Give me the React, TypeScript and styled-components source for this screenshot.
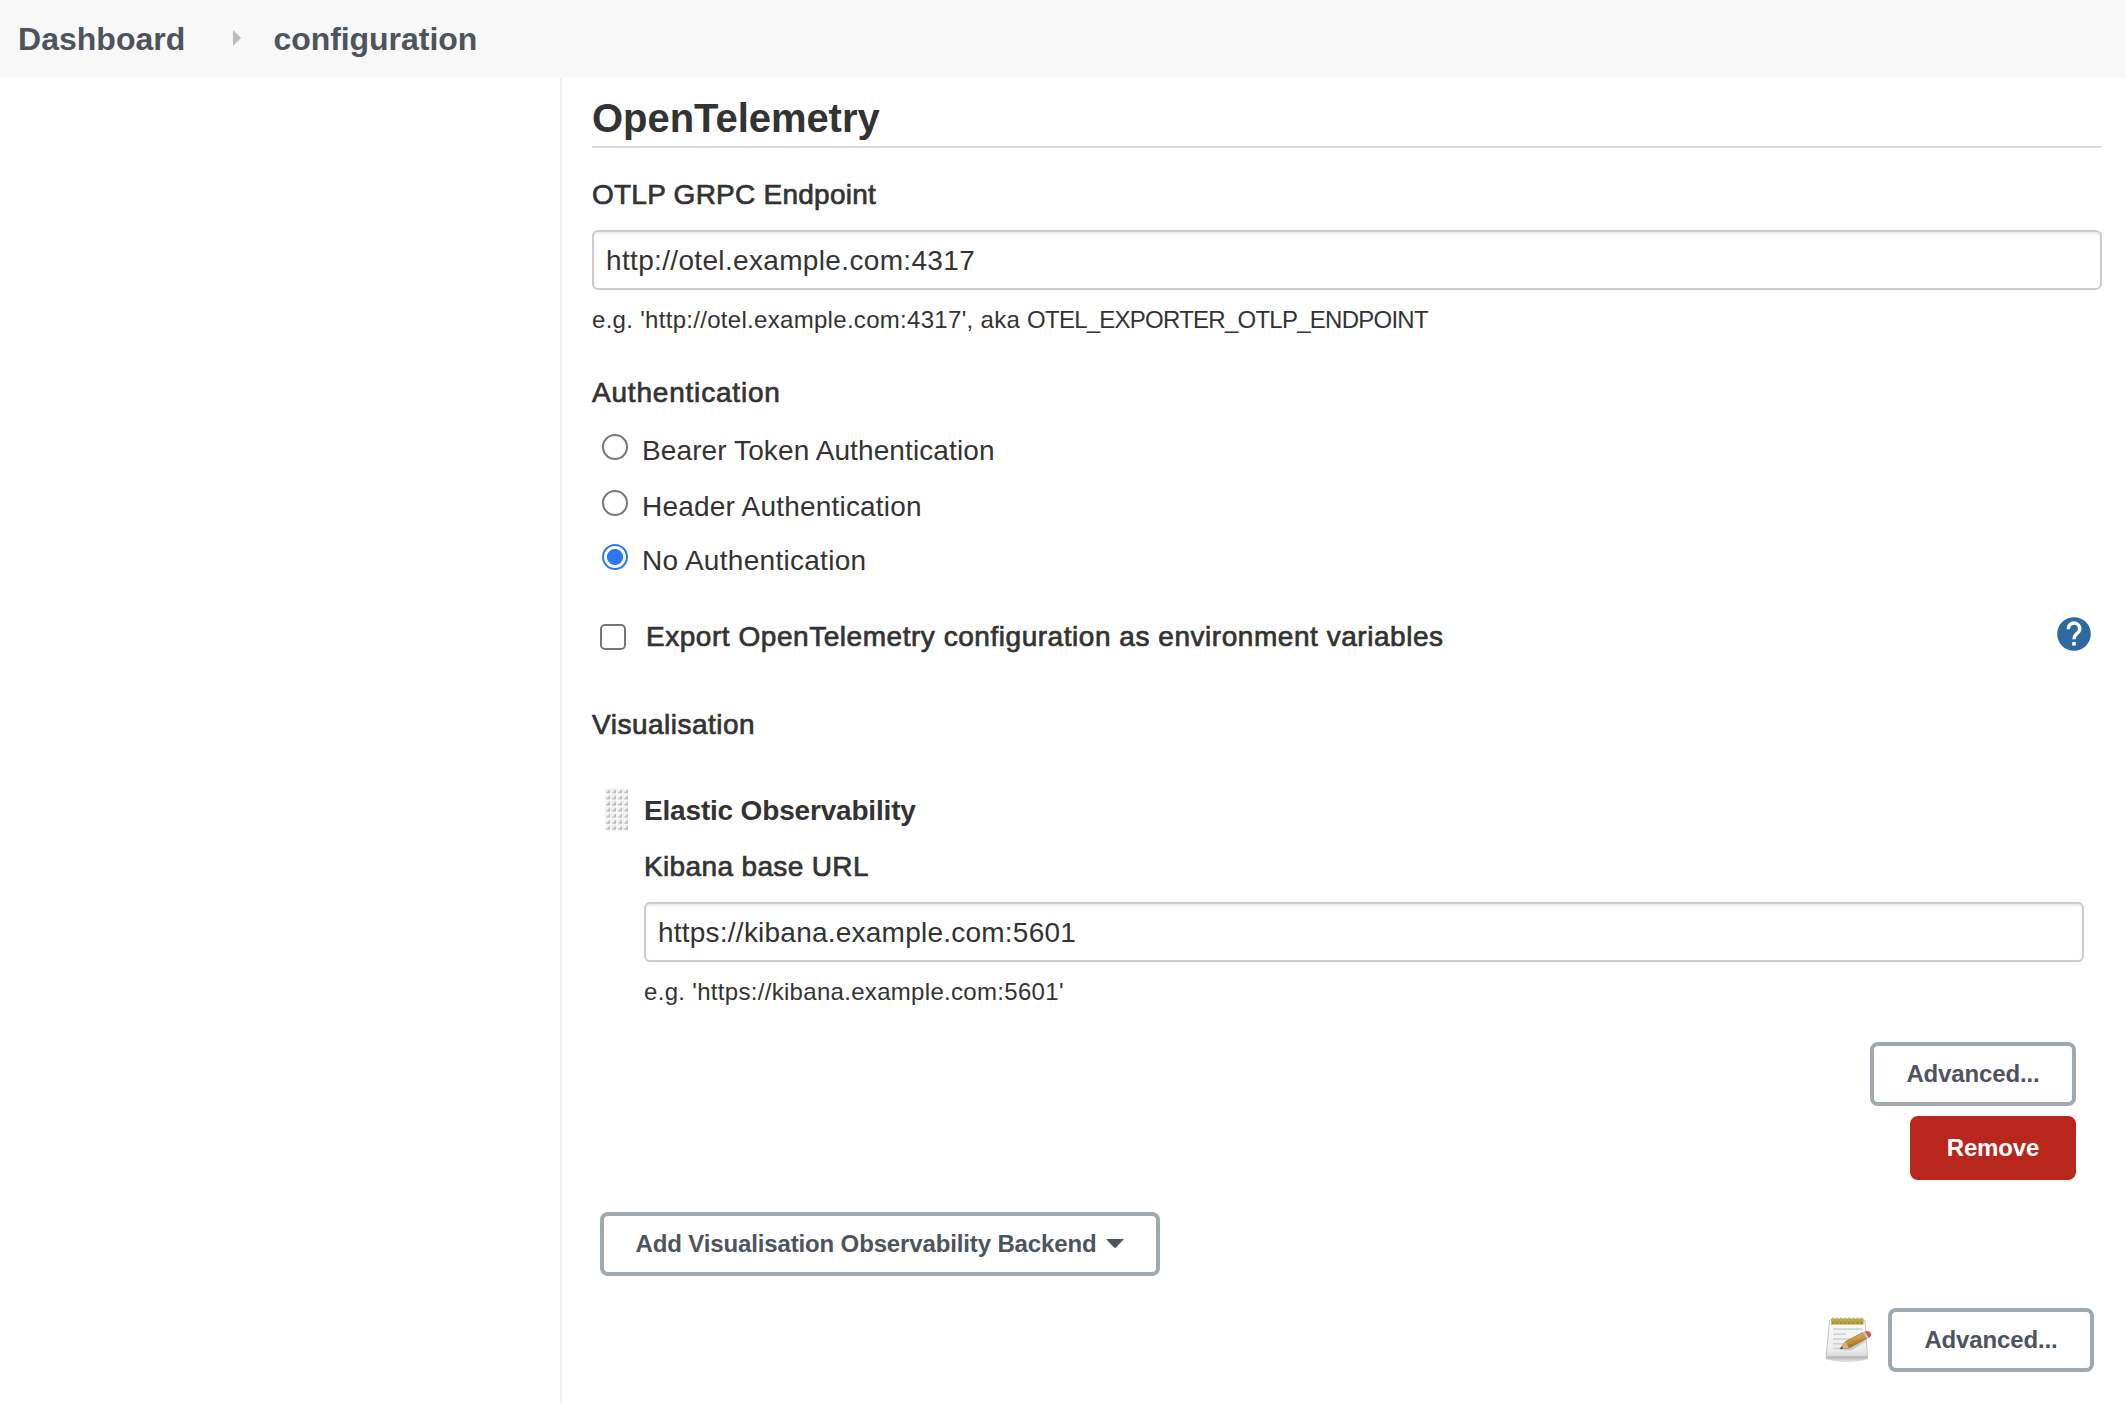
import React from "react";
import styled, { createGlobalStyle } from "styled-components";

const GlobalStyle = createGlobalStyle`
  * { box-sizing: border-box; }
  body {
    margin: 0;
    background: #fff;
    color: #333;
    font-family: "Liberation Sans", Arial, sans-serif;
    overflow: hidden;
  }
`;

const Page = styled.div`
  display: flex;
  flex-direction: column;
  height: 1404px;
`;

const Breadcrumbs = styled.nav`
  display: flex;
  align-items: center;
  height: 78px;
  flex: none;
  padding-left: 18px;
  background: #f8f8f8;
`;

const Crumb = styled.a<{ $spacing: number }>`
  font-size: 32px;
  line-height: 78px;
  font-weight: bold;
  color: #4d545d;
  letter-spacing: ${(p) => p.$spacing}px;
  white-space: nowrap;
`;

const CrumbArrow = styled.svg`
  flex: none;
  width: 8px;
  height: 16px;
  margin: 0 32px 0 48px;
  transform: translateY(-1px);
`;

const Columns = styled.div`
  display: flex;
  flex: 1;
  min-height: 0;
`;

const SidePanel = styled.aside`
  width: 562px;
  flex: none;
  border-right: 2px solid #eaeff2;
`;

const Main = styled.main`
  display: flex;
  flex-direction: column;
  flex: 1;
  padding: 16px 24px 0 30px;
`;

const SectionTitle = styled.h1`
  margin: 0 0 26px;
  height: 54px;
  border-bottom: 2px solid #dedede;
  font-size: 40px;
  line-height: 48px;
  font-weight: bold;
  letter-spacing: -0.05px;
`;

const Label = styled.div<{ $spacing: number }>`
  height: 40px;
  font-size: 28px;
  line-height: 42px;
  letter-spacing: ${(p) => p.$spacing}px;
  -webkit-text-stroke: 0.7px #333;
  white-space: nowrap;
`;

const TextInput = styled.input<{ $spacing: number }>`
  display: block;
  width: 100%;
  height: 60px;
  margin: 16px 0 14px;
  padding: 2px 12px 0;
  border: 2px solid #ccc;
  border-radius: 6px;
  background: #fff;
  box-shadow: inset 0 2px 2px rgba(0, 0, 0, 0.075);
  color: #333;
  font-family: inherit;
  font-size: 28px;
  letter-spacing: ${(p) => p.$spacing}px;
  outline: none;
`;

const Hint = styled.div<{ $spacing: number }>`
  font-size: 24px;
  line-height: 32px;
  letter-spacing: ${(p) => p.$spacing}px;
  white-space: nowrap;
`;

const EnvName = styled.span`
  letter-spacing: -0.75px;
`;

const Field = styled.div`
  display: flex;
  flex-direction: column;
`;

const RadioGroup = styled.div`
  display: flex;
  flex-direction: column;
  margin-top: 36px;
`;

const RadioList = styled.div`
  padding: 18px 0 0 10px;
`;

const RadioRow = styled.label<{ $height: number; $spacing: number }>`
  display: flex;
  align-items: flex-start;
  gap: 14px;
  height: ${(p) => p.$height}px;
  font-size: 28px;
  line-height: 42px;
  letter-spacing: ${(p) => p.$spacing}px;
`;

const Radio = styled.input`
  appearance: none;
  flex: none;
  width: 26px;
  height: 26px;
  margin: 4px 0 0;
  border: 2px solid #767676;
  border-radius: 50%;
  background: #fff;
  &:checked {
    border-color: #2f76f6;
    background: radial-gradient(circle, #2f76f6 7.6px, #fff 8.4px);
  }
`;

const ExportRow = styled.div`
  display: flex;
  align-items: flex-start;
  height: 40px;
  margin-top: 36px;
  padding: 0 11px 0 8px;
`;

const Checkbox = styled.input`
  appearance: none;
  flex: none;
  width: 26px;
  height: 26px;
  margin: 8px 20px 0 0;
  border: 2px solid #767676;
  border-radius: 5px;
  background: #fff;
`;

const HelpIcon = styled.svg`
  flex: none;
  width: 34px;
  height: 34px;
  margin: 1px 0 0 auto;
`;

const Visualisation = styled.section`
  margin-top: 48px;
`;

const Backend = styled.div`
  display: flex;
  align-items: flex-start;
  margin-top: 44px;
  padding-left: 13px;
`;

const Grip = styled.svg`
  flex: none;
  width: 23px;
  height: 44px;
  margin-right: 16px;
`;

const BackendBody = styled.div`
  display: flex;
  flex-direction: column;
  flex: 1;
  padding: 2px 18px 0 0;
`;

const BackendTitle = styled.div`
  height: 40px;
  margin-bottom: 16px;
  font-size: 28px;
  line-height: 42px;
  font-weight: bold;
  letter-spacing: -0.18px;
`;

const BackendActions = styled.div`
  display: flex;
  flex-direction: column;
  align-items: flex-end;
  gap: 10px;
  margin-top: 34px;
  padding-right: 8px;
`;

const Button = styled.button<{ $width: number; $danger?: boolean }>`
  display: flex;
  align-items: center;
  justify-content: center;
  flex: none;
  gap: 10px;
  width: ${(p) => p.$width}px;
  height: 64px;
  padding: 0 0 1px;
  border: 4px solid ${(p) => (p.$danger ? "#b9261b" : "#9fa9b0")};
  border-radius: 8px;
  background: ${(p) => (p.$danger ? "#b9261b" : "#fff")};
  color: ${(p) => (p.$danger ? "#fff" : "#4d545d")};
  font-family: inherit;
  font-size: 24px;
  font-weight: bold;
  letter-spacing: -0.14px;
  white-space: nowrap;
`;

const Caret = styled.svg`
  width: 18px;
  height: 9px;
`;

const AddRow = styled.div`
  display: flex;
  margin-top: 32px;
  padding-left: 8px;
`;

const FooterRow = styled.div`
  display: flex;
  align-items: center;
  justify-content: flex-end;
  gap: 14px;
  margin-top: 32px;
  padding-right: 8px;
`;

const NotepadSvg = styled.svg`
  flex: none;
  width: 50px;
  height: 48px;
`;

const authOptions = [
  { text: "Bearer Token Authentication", height: 56, spacing: 0.107 },
  { text: "Header Authentication", height: 54, spacing: 0.205 },
  { text: "No Authentication", height: 40, spacing: 0.29 },
];

function DragHandle() {
  return (
    <Grip viewBox="0 0 23 44">
      <defs>
        <linearGradient id="dot" x1="0" y1="0" x2="1" y2="1">
          <stop offset="0.25" stopColor="#fafafa" />
          <stop offset="0.7" stopColor="#b5b5b5" />
          <stop offset="1" stopColor="#c8c8c8" />
        </linearGradient>
      </defs>
      {Array.from({ length: 28 }, (_, i) => (
        <g key={i} transform={`translate(${(i % 4) * 6} ${Math.floor(i / 4) * 6.1})`}>
          <rect x="0" y="0.4" width="5.6" height="5.6" rx="1.4" fill="#ededed" />
          <rect x="1" y="1.2" width="4" height="4" rx="0.6" fill="url(#dot)" />
        </g>
      ))}
    </Grip>
  );
}

function Notepad() {
  return (
    <NotepadSvg viewBox="0 0 50 48">
      <defs>
        <linearGradient id="paper" x1="0" y1="0" x2="0" y2="1">
          <stop offset="0" stopColor="#fafafa" />
          <stop offset="0.75" stopColor="#eeeeee" />
          <stop offset="1" stopColor="#d2d2d2" />
        </linearGradient>
        <linearGradient id="wood" x1="0" y1="0" x2="0.45" y2="1">
          <stop offset="0" stopColor="#e6c27c" />
          <stop offset="0.5" stopColor="#cf9f4c" />
          <stop offset="1" stopColor="#94631f" />
        </linearGradient>
      </defs>
      <ellipse cx="23" cy="43.5" rx="17" ry="2.4" fill="#dcdcdc" />
      <path d="M5.5 5 Q5.5 4 6.5 4 H40 Q41 4 41 5 L43.6 42 Q43.6 43 42.6 43 H3 Q2 43 2 42 Z" fill="url(#paper)" stroke="#bdbdbd" strokeWidth="0.9" />
      <path d="M2.4 40 H43.2 L43.6 42.5 H2 Z" fill="#bdbdbd" />
      <rect x="7.2" y="2.6" width="32.4" height="6" fill="#b5a347" />
      {Array.from({ length: 8 }, (_, i) => (
        <g key={i}>
          <rect x={8.1 + i * 4.05} y="1.4" width="2" height="6.2" rx="1" fill="#c2b153" />
          <rect x={8.3 + i * 4.05} y="5.4" width="1.6" height="2.2" rx="0.7" fill="#8f7f33" />
        </g>
      ))}
      <g fill="#cfcfcf">
        <rect x="9" y="12.3" width="29" height="1.6" />
        <rect x="9" y="17.3" width="13" height="1.6" />
        <rect x="9" y="22.2" width="20" height="1.6" />
        <rect x="9" y="27" width="12" height="1.6" />
        <rect x="9" y="31.6" width="7" height="1.6" />
      </g>
      <path d="M17 34.5 L28 34 L42 25.5 L40 25 L24 32 Z" fill="#9a9a9a" opacity="0.45" />
      <path d="M16 33 L21.3 25.6 L38.6 16.6 L42.6 22.8 L25 32 Z" fill="url(#wood)" stroke="#8d6324" strokeWidth="0.6" />
      <path d="M16 33 L21.3 25.6 L25 32 Z" fill="#d5b382" />
      <path d="M16 33 L17.9 30.4 L19.3 32.7 Z" fill="#4a4136" />
      <path d="M38.6 16.6 L41 15.5 L44.6 21.9 L42.6 22.8 Z" fill="#c3c3c3" />
      <path d="M41 15.5 Q45.2 14.2 46.7 17.2 Q47.9 20.6 44.6 21.9 Z" fill="#dd5348" />
    </NotepadSvg>
  );
}

export default function App() {
  return (
    <Page>
      <GlobalStyle />
      <Breadcrumbs>
        <Crumb $spacing={0.03}>Dashboard</Crumb>
        <CrumbArrow viewBox="0 0 8 16">
          <path d="M0 0 L8 8 L0 16 Z" fill="#bcbcbc" />
        </CrumbArrow>
        <Crumb $spacing={-0.048}>configuration</Crumb>
      </Breadcrumbs>
      <Columns>
        <SidePanel />
        <Main>
          <SectionTitle>OpenTelemetry</SectionTitle>
          <Field>
            <Label $spacing={0.244}>OTLP GRPC Endpoint</Label>
            <TextInput $spacing={0.34} type="text" defaultValue="http://otel.example.com:4317" />
            <Hint $spacing={0.3}>
              e.g. 'http://otel.example.com:4317', aka <EnvName>OTEL_EXPORTER_OTLP_ENDPOINT</EnvName>
            </Hint>
          </Field>
          <RadioGroup>
            <Label $spacing={0.8}>Authentication</Label>
            <RadioList>
              {authOptions.map((o, i) => (
                <RadioRow key={o.text} $height={o.height} $spacing={o.spacing}>
                  <Radio type="radio" name="auth" defaultChecked={i === 2} />
                  {o.text}
                </RadioRow>
              ))}
            </RadioList>
          </RadioGroup>
          <ExportRow>
            <Checkbox type="checkbox" />
            <Label $spacing={0.54}>Export OpenTelemetry configuration as environment variables</Label>
            <HelpIcon viewBox="0 0 34 34">
              <circle cx="17" cy="17" r="16.8" fill="#2d6a9f" />
              <path
                d="M11.4 12.2 A5.7 5.5 0 1 1 20.6 15.9 C18.3 17.8 17 18.8 17 22.2"
                fill="none"
                stroke="#fff"
                strokeWidth="3.4"
              />
              <rect x="15.2" y="25" width="3.6" height="3.6" fill="#fff" />
            </HelpIcon>
          </ExportRow>
          <Visualisation>
            <Label $spacing={0.5}>Visualisation</Label>
            <Backend>
              <DragHandle />
              <BackendBody>
                <BackendTitle>Elastic Observability</BackendTitle>
                <Label $spacing={0.36}>Kibana base URL</Label>
                <TextInput $spacing={0.23} type="text" defaultValue="https://kibana.example.com:5601" />
                <Hint $spacing={0.308}>e.g. 'https://kibana.example.com:5601'</Hint>
                <BackendActions>
                  <Button $width={206}>Advanced...</Button>
                  <Button $width={166} $danger>
                    Remove
                  </Button>
                </BackendActions>
              </BackendBody>
            </Backend>
            <AddRow>
              <Button $width={560}>
                Add Visualisation Observability Backend
                <Caret viewBox="0 0 18 9">
                  <path d="M0 0 H18 L10 8.4 Q9 9.2 8 8.4 Z" fill="#4d545d" />
                </Caret>
              </Button>
            </AddRow>
          </Visualisation>
          <FooterRow>
            <Notepad />
            <Button $width={206}>Advanced...</Button>
          </FooterRow>
        </Main>
      </Columns>
    </Page>
  );
}
